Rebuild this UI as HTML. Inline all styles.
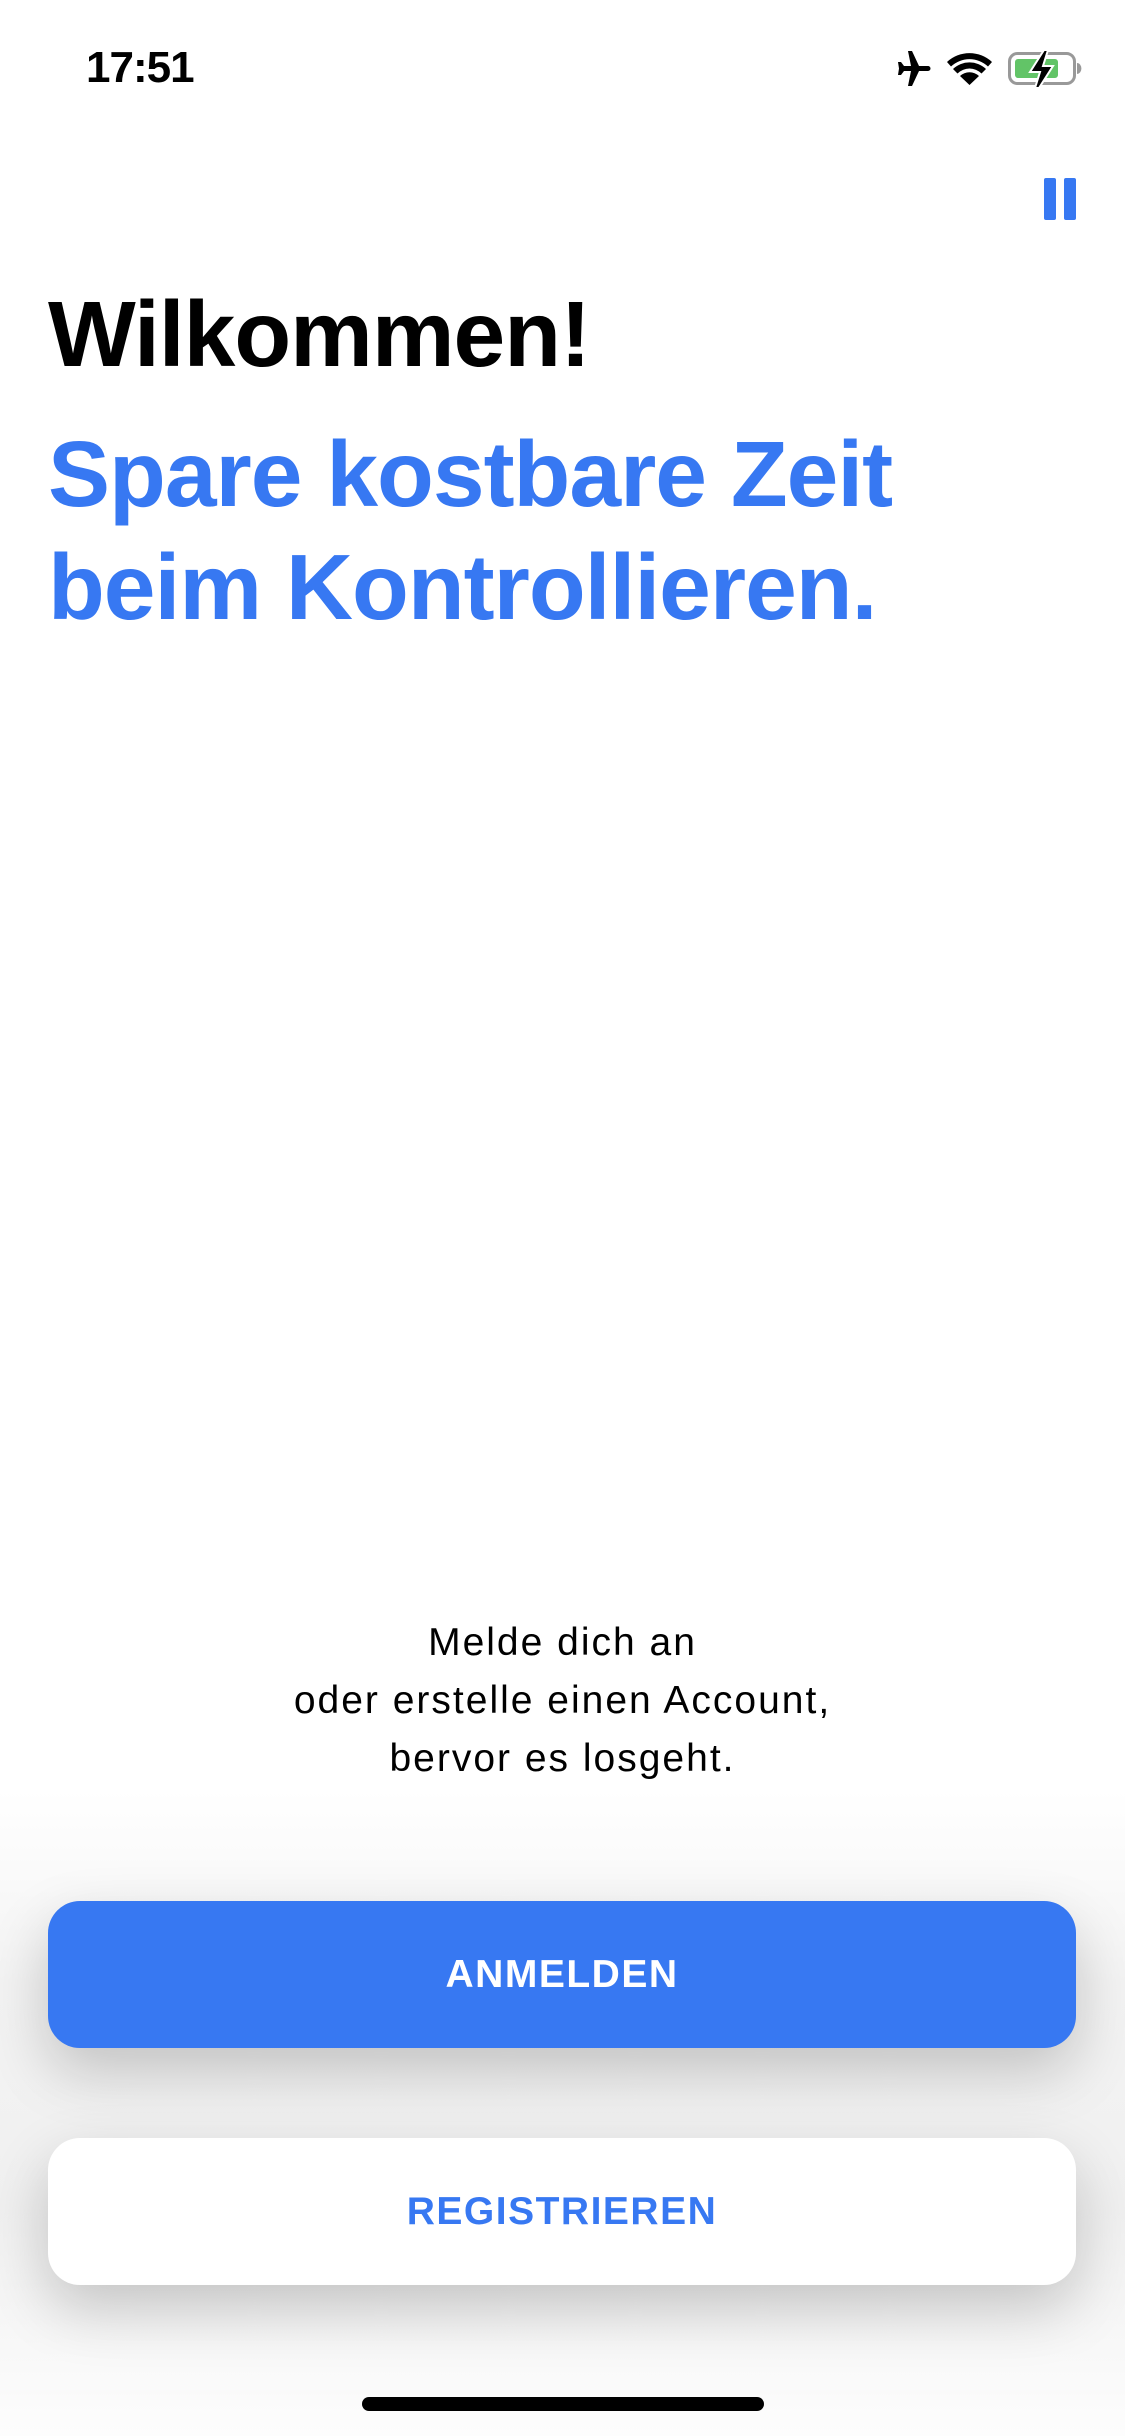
<!DOCTYPE html>
<html><head><meta charset="utf-8"><style>
html,body{margin:0;padding:0}
body{width:1125px;height:2436px;position:relative;background:#fff;font-family:"Liberation Sans",sans-serif;overflow:hidden}
.a{position:absolute}
.time{left:86px;top:43px;font-size:44px;font-weight:bold;color:#000;letter-spacing:-1px}
.h1{left:48px;top:281px;font-size:93px;font-weight:bold;color:#000;letter-spacing:-1px;white-space:nowrap}
.h2{left:48px;top:418px;font-size:93px;font-weight:bold;color:#3778f2;line-height:113px;letter-spacing:-1px;white-space:nowrap}
.msg{left:0;width:1125px;top:1614px;text-align:center;font-size:39px;letter-spacing:2px;line-height:58px;color:#000}
.btn{left:48px;width:1028px;height:147px;border-radius:32px;text-align:center;line-height:147px;font-size:39px;font-weight:bold;letter-spacing:1.5px;box-shadow:0 24px 60px rgba(0,0,0,.2)}
.fade{left:0;top:1790px;width:1125px;height:646px;background:linear-gradient(#fff,#f3f3f3 30%,#f0f0f0 65%,#fdfdfd)}
</style></head><body>
<div class="a time">17:51</div>
<svg class="a" style="left:880px;top:45px" width="210" height="46" viewBox="880 45 210 46">
<path d="M908 51 l4 0 l7 15 l9 0 a2.5 2.5 0 0 1 0 5 l-9 0 l-7 15 l-4 0 l3 -15 l-7 0 l-3 4 l-3 0 l1 -6.5 l-1 -6.5 l3 0 l3 4 l7 0 z" fill="#000"/>
<path d="M947 62 a33 33 0 0 1 45 0 l-4 4.5 a27 27 0 0 0 -37 0z M953 69 a24 24 0 0 1 33 0 l-4.5 4.5 a17 17 0 0 0 -24 0z M960 76 a14 14 0 0 1 19 0 l-9.5 9z" fill="#000"/>
<rect x="1009.5" y="53.5" width="65" height="30" rx="8" fill="none" stroke="#999" stroke-width="3"/>
<rect x="1015" y="59" width="43" height="19" rx="3" fill="#62c467"/>
<path d="M1077 63 a4 5 0 0 1 0 11z" fill="#999"/>
<path d="M1044 50 l-14 22 l10 0 l-5 16 l4 0 l14 -22 l-10 0 l5 -16z" fill="#000" stroke="#fff" stroke-width="2"/>
</svg>
<div class="a" style="left:1044px;top:178px;width:12px;height:42px;background:#3778f2;border-radius:2px"></div>
<div class="a" style="left:1064px;top:178px;width:12px;height:42px;background:#3778f2;border-radius:2px"></div>
<div class="a h1">Wilkommen!</div>
<div class="a h2">Spare kostbare Zeit<br>beim Kontrollieren.</div>
<div class="a fade"></div>
<div class="a msg">Melde dich an<br>oder erstelle einen Account,<br>bervor es losgeht.</div>
<div class="a btn" style="top:1901px;background:#3778f2;color:#fff">ANMELDEN</div>
<div class="a btn" style="top:2138px;background:#fff;color:#3778f2">REGISTRIEREN</div>
<div class="a" style="left:362px;top:2397px;width:402px;height:14px;border-radius:7px;background:#000"></div>
</body></html>
